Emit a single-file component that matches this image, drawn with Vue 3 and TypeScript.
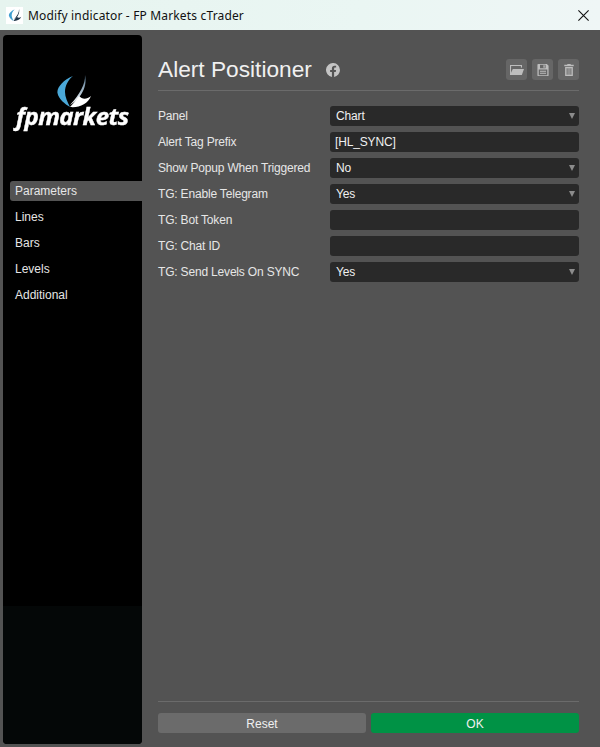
<template>
  <div class="window">
    <header class="titlebar">
      <span class="app-icon">
        <svg width="14" height="14" viewBox="5 3 38 36">
          <path :d="blue" fill="#3f9fd0" />
          <path :d="blade" fill="#22364a" />
          <path :d="crescent" fill="#22364a" />
        </svg>
      </span>
      <span class="window-title">Modify indicator - FP Markets cTrader</span>
      <svg class="close" width="11" height="11" viewBox="0 0 11 11">
        <path d="M.4.4l10.200 10.200M10.600.4L.4 10.600" stroke="#111" stroke-width="1.100" fill="none" />
      </svg>
    </header>

    <div class="body">
      <aside class="sidebar">
        <div class="logo">
          <svg class="swoosh" width="45" height="40" viewBox="0 0 45 40">
            <defs>
              <linearGradient id="bladeFill" x1="0.6" y1="0" x2="0.4" y2="1">
                <stop offset="0" stop-color="#5f7f98" />
                <stop offset="0.5" stop-color="#a8bccb" />
                <stop offset="1" stop-color="#ffffff" />
              </linearGradient>
            </defs>
            <path :d="blue" fill="#4aa8d8" />
            <path :d="blade" fill="url(#bladeFill)" />
            <path :d="crescent" fill="#fff" />
          </svg>
          <span class="wordmark">fpmarkets</span>
        </div>
        <nav class="nav">
          <a
            v-for="item in navItems"
            :key="item"
            class="nav-item"
            :class="{ active: item === 'Parameters' }"
          >{{ item }}</a>
        </nav>
        <div class="sidebar-foot"></div>
      </aside>

      <main class="main">
        <div class="heading">
          <h1>Alert Positioner</h1>
          <svg class="fb" width="14" height="14" viewBox="0 0 16 16">
            <path fill="#c4c4c4" d="M16 8a8 8 0 1 0-9.250 7.900v-5.600H4.700V8h2.050V6.240c0-2 1.200-3.120 3.030-3.120.88 0 1.800.16 1.800.16v1.970h-1c-1 0-1.300.62-1.300 1.250V8h2.220l-.36 2.300H9.280v5.600A8 8 0 0 0 16 8Z" />
          </svg>
          <div class="tools">
            <button class="tool" type="button">
              <svg width="14" height="10" viewBox="0 0 14 10">
                <path fill="#bdbdbd" d="M0 0h12v2.600H0z" />
                <path fill="#bdbdbd" d="M0 0h1.100v10H0z" />
                <path fill="#bdbdbd" d="M2.800 4H14l-2.200 6H0l2.800-6Z" />
                <path fill="#666" d="M1.100 1.100h9.800v1.900H2.200L1.100 6V1.100Z" />
              </svg>
            </button>
            <button class="tool" type="button">
              <svg width="12" height="12" viewBox="0 0 13 14">
                <path fill="#bdbdbd" d="M1 0h10l2 2v11a1 1 0 0 1-1 1H1a1 1 0 0 1-1-1V1a1 1 0 0 1 1-1Z" />
                <path fill="#666" d="M3 1h6.500v4H3zM1.500 6.500h10V13h-10z" />
                <path fill="#bdbdbd" d="M7 1.500h1.500v3H7zM3 8h7v1H3zM3 10.300h7v1H3z" />
              </svg>
            </button>
            <button class="tool" type="button">
              <svg width="10" height="12" viewBox="0 0 11 14">
                <path fill="#bdbdbd" d="M3.500 0h4v1H11v1.500H0V1h3.500V0ZM1 3.500h9V14H1V3.500Z" />
                <path fill="#666" d="M2.700 5h1.200v7.500H2.700zM4.900 5h1.200v7.500H4.900zM7.100 5h1.200v7.500H7.100z" />
              </svg>
            </button>
          </div>
        </div>

        <form class="fields" @submit.prevent>
          <template v-for="row in rows" :key="row.label">
            <label class="field-label">{{ row.label }}</label>
            <div class="control" :class="{ select: row.select }">
              <span>{{ row.value }}</span>
              <i v-if="row.select" class="arrow"></i>
            </div>
          </template>
        </form>

        <footer class="footer">
          <button class="btn reset" type="button">Reset</button>
          <button class="btn ok" type="button">OK</button>
        </footer>
      </main>
    </div>
  </div>
</template>

<script setup lang="ts">
interface Row {
  label: string
  value: string
  select: boolean
}

// the three strokes of the logo mark, shared by the title bar icon and the sidebar
const blue = 'M23 6C13 10 6.500 18 7.500 23C8.500 29 15 34 20 37C17.500 32 15 27 15 22C15 16 18 10 23 6Z'
const blade = 'M35 5C35.500 14 30 24 20 35C29 30 38 18 35 5Z'
const crescent = 'M20 37C29 38 38 34 41 26C36 30 32 29 29 26C26 30 23 34 20 37Z'

const navItems = ['Parameters', 'Lines', 'Bars', 'Levels', 'Additional']

const rows: Row[] = [
  { label: 'Panel', value: 'Chart', select: true },
  { label: 'Alert Tag Prefix', value: '[HL_SYNC]', select: false },
  { label: 'Show Popup When Triggered', value: 'No', select: true },
  { label: 'TG: Enable Telegram', value: 'Yes', select: true },
  { label: 'TG: Bot Token', value: '', select: false },
  { label: 'TG: Chat ID', value: '', select: false },
  { label: 'TG: Send Levels On SYNC', value: 'Yes', select: true }
]
</script>

<style>
html, body {
  margin: 0;
  background: #535353;
}
</style>

<style scoped>
.window {
  display: flex;
  flex-direction: column;
  width: 600px;
  height: 747px;
  overflow: hidden;
  font-family: "Liberation Sans", Arial, sans-serif;
  font-size: 12px;
  color: #e6e6e6;
  background: #535353;
}
.titlebar {
  display: flex;
  align-items: center;
  flex: 0 0 30px;
  padding: 0 11px 0 6px;
  background: linear-gradient(90deg, #e6f4ef, #eaf6f3 60%, #eff6f6);
  color: #111;
}
.app-icon {
  display: flex;
  align-items: center;
  justify-content: center;
  width: 17px;
  height: 17px;
  background: #fff;
}
.window-title {
  margin-left: 5px;
  font-family: "Noto Sans", "Open Sans", sans-serif;
  font-size: 12px;
  letter-spacing: 0.16px;
}
.close {
  margin-left: auto;
}
.body {
  display: flex;
  flex: 1;
  min-height: 0;
}
.sidebar {
  display: flex;
  flex-direction: column;
  width: 139px;
  margin: 5px 0 3px 3px;
  background: #000;
  border-radius: 4px;
  overflow: hidden;
}
.logo {
  position: relative;
  height: 146px;
}
.swoosh {
  position: absolute;
  left: 47px;
  top: 35px;
  filter: blur(0.4px);
}
.wordmark {
  position: absolute;
  left: 13px;
  top: 64px;
  font-family: "Open Sans", sans-serif;
  font-size: 24px;
  font-weight: 700;
  font-style: italic;
  letter-spacing: -0.55px;
  color: #fff;
  -webkit-text-stroke: 0.4px #fff;
  filter: blur(0.3px);
}
.nav {
  display: flex;
  flex-direction: column;
  gap: 6px;
  padding-left: 7px;
}
.nav-item {
  height: 20px;
  padding-left: 5px;
  line-height: 20px;
  border-radius: 3px 0 0 3px;
  color: #e6e6e6;
}
.nav-item.active {
  background: #535353;
}
.sidebar-foot {
  flex: 0 0 138px;
  margin-top: auto;
  background: #040707;
}
.main {
  display: flex;
  flex-direction: column;
  flex: 1;
  min-width: 0;
  padding: 0 21px 14px 16px;
}
.heading {
  display: flex;
  align-items: center;
  flex: 0 0 61px;
  box-sizing: border-box;
  padding-top: 19px;
  border-bottom: 1px solid #6b6b6b;
}
h1 {
  margin: 0;
  font-size: 22.7px;
  font-weight: 400;
  color: #f0f0f0;
}
.fb {
  margin-left: 14px;
}
.tools {
  display: flex;
  gap: 5px;
  margin-left: auto;
}
.tool {
  display: flex;
  align-items: center;
  justify-content: center;
  width: 21px;
  height: 21px;
  padding: 0;
  border: 0;
  border-radius: 3px;
  background: #666;
}
.fields {
  display: grid;
  grid-template-columns: 172px 1fr;
  grid-auto-rows: 20px;
  row-gap: 6px;
  align-items: center;
  margin-top: 15px;
}
.field-label {
  letter-spacing: -0.18px;
  color: #e6e6e6;
}
.control {
  position: relative;
  height: 20px;
  padding-left: 5px;
  line-height: 20px;
  letter-spacing: -0.15px;
  border-radius: 3px;
  background: #292929;
  color: #f0f0f0;
}
.control.select {
  padding-left: 6px;
}
.arrow {
  position: absolute;
  right: 4px;
  top: 7px;
  border-left: 3px solid transparent;
  border-right: 3px solid transparent;
  border-top: 6px solid #8c8c8c;
}
.footer {
  display: grid;
  grid-template-columns: 208px 208px;
  justify-content: space-between;
  margin-top: auto;
  padding-top: 11px;
  border-top: 1px solid #6b6b6b;
}
.btn {
  height: 20px;
  padding: 1px 0 0;
  border: 0;
  border-radius: 3px;
  font: inherit;
  color: #f0f0f0;
}
.reset {
  background: #6b6b6b;
}
.ok {
  background: #009245;
}
</style>
